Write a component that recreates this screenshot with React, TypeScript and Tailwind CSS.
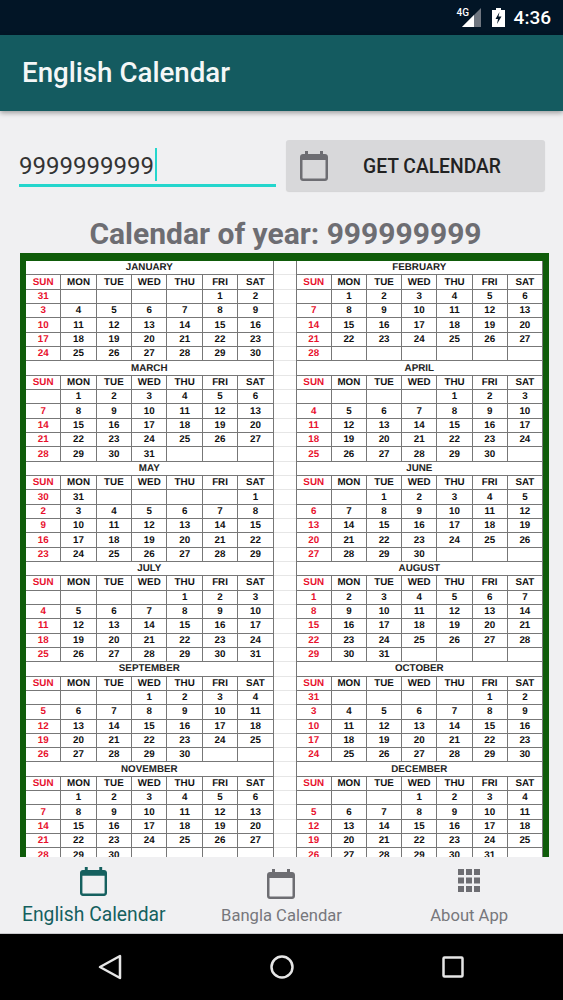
import React from "react";

const DAYS = ["SUN", "MON", "TUE", "WED", "THU", "FRI", "SAT"];

// first = weekday of the 1st, days that don't fit wrap into the first row
const MONTHS = [
  { name: "JANUARY", first: 5, len: 31 },
  { name: "FEBRUARY", first: 1, len: 28 },
  { name: "MARCH", first: 1, len: 31 },
  { name: "APRIL", first: 4, len: 30 },
  { name: "MAY", first: 6, len: 31 },
  { name: "JUNE", first: 2, len: 30 },
  { name: "JULY", first: 4, len: 31 },
  { name: "AUGUST", first: 0, len: 31 },
  { name: "SEPTEMBER", first: 3, len: 30 },
  { name: "OCTOBER", first: 5, len: 31 },
  { name: "NOVEMBER", first: 1, len: 30 },
  { name: "DECEMBER", first: 3, len: 31 },
];

function buildCells(first: number, len: number) {
  const cells: (number | null)[] = Array(35).fill(null);
  for (let d = 1; d <= len; d++) {
    cells[(first + d - 1) % 35] = d;
  }
  return cells;
}

function Cell({ col, children }: { col: number; children?: React.ReactNode }) {
  return (
    <div
      className={
        col === 0
          ? "h-[14.33px] pt-[1px] flex items-center justify-center border-b border-r border-[#777] text-[#e8112d]"
          : "h-[14.33px] pt-[1px] flex items-center justify-center border-b border-r border-[#777] text-[#111]"
      }
    >
      {children}
    </div>
  );
}

function Month({ name, first, len }: { name: string; first: number; len: number }) {
  return (
    <div>
      <div className="h-[14.33px] pt-[1px] flex items-center justify-center border-b border-r border-[#777] text-[#222]">
        {name}
      </div>
      <div className="grid grid-cols-7">
        {DAYS.map((d, i) => (
          <Cell key={d} col={i}>
            {d}
          </Cell>
        ))}
        {buildCells(first, len).map((d, i) => (
          <Cell key={i} col={i % 7}>
            {d}
          </Cell>
        ))}
      </div>
    </div>
  );
}

function CalendarIcon({ className }: { className: string }) {
  return (
    <svg viewBox="0 0 28 30" className={className} fill="currentColor">
      <path d="M5 0h3v3h12V0h3v3h2c1.7 0 3 1.3 3 3v21c0 1.7-1.300 3-3 3H3c-1.700 0-3-1.300-3-3V6c0-1.700 1.300-3 3-3h2V0zM2.500 9v18c0 .3.200.5.500.5h22c.3 0 .5-.2.500-.5V9h-23z" />
    </svg>
  );
}

function GridIcon() {
  return (
    <svg viewBox="0 0 22 23" className="w-[22px] h-[23px]" fill="#6d6d72">
      {[0, 8.500, 17].map((y) =>
        [0, 8, 16].map((x) => <rect key={`${x}-${y}`} x={x} y={y} width="6" height="6" />),
      )}
    </svg>
  );
}

function StatusBar() {
  return (
    <div className="h-[35px] bg-[#021526] flex items-center justify-end pr-3 text-white">
      <div className="relative w-[24px] h-[20px] mr-[11px]">
        <span className="absolute left-0 top-0 text-[10px] leading-[10px] font-medium">4G</span>
        <svg viewBox="0 0 19 19" className="absolute right-0 top-0 w-[19px] h-[19px]">
          <path d="M19 0v19H0z" fill="#6f7680" />
          <path d="M12 7v12H0z" fill="#ffffff" />
        </svg>
      </div>
      <svg viewBox="0 0 13 19" className="w-[13px] h-[19px] mr-[9px]">
        <path d="M4 0h5v2h4v17H0V2h4z" fill="#ffffff" />
        <path d="M7.500 4 3.500 11h2.500l-1 5 4.500-7.500H6.500z" fill="#021526" />
      </svg>
      <span className="text-[19px] leading-none font-medium">4:36</span>
    </div>
  );
}

function NavTab({
  label,
  active,
  icon,
}: {
  label: string;
  active?: boolean;
  icon: React.ReactNode;
}) {
  return (
    <div className="flex flex-col items-center">
      <div className={active ? "h-[37px] pt-[10px]" : "h-[39px] pt-[12px]"}>{icon}</div>
      <span
        className={
          active
            ? "text-[19.300px] leading-[28px] text-[#15605f] mt-[7px]"
            : "text-[16.600px] leading-[26px] text-[#77777c] mt-[7px]"
        }
      >
        {label}
      </span>
    </div>
  );
}

export default function App() {
  return (
    <div
      className="w-[563px] h-[1000px] flex flex-col overflow-hidden bg-[#f0f0f2]"
      style={{ fontFamily: "Roboto, sans-serif" }}
    >
      <StatusBar />

      <header className="h-[76px] shrink-0 bg-[#145b60] flex items-center pl-[22px] shadow-[0_2px_5px_rgba(0,0,0,0.35)] z-10">
        <h1 className="text-[27.700px] font-medium text-[#f4f7f7]">English Calendar</h1>
      </header>

      <main className="flex-1 overflow-hidden">
        <div className="flex pt-[29px] pl-[19px]">
          <div className="w-[257px] h-[47px] flex items-end border-b-[3px] border-[#24d6cd]">
            <span className="text-[24px] leading-[35px] text-[#333]">9999999999</span>
            <span className="w-[2px] h-[33px] ml-[1px] mb-[3px] bg-[#24d6cd]" />
          </div>
          <button
            type="button"
            className="w-[259px] h-[51px] ml-[10px] rounded-[3px] bg-[#d8d8da] shadow-[0_1px_1px_rgba(0,0,0,0.12)] flex items-center pl-[14px] text-[#6d6d72]"
          >
            <CalendarIcon className="w-[28px] h-[30px]" />
            <span className="ml-[35px] text-[19.300px] leading-[28px] pt-[2px] font-medium text-[#222]">
              GET CALENDAR
            </span>
          </button>
        </div>

        <h2 className="mt-[17px] h-[45px] pl-[8px] text-center text-[30px] leading-[51px] font-bold text-[#6d6d72]">
          Calendar of year: 999999999
        </h2>

        <div className="ml-[20px] w-[529px] border-x-[6px] border-t-[8px] border-[#0f5c0a] bg-white">
          <div
            className="grid grid-cols-[247.600px_22px_247.400px] font-bold text-[9.800px] leading-none [text-rendering:geometricPrecision]"
            style={{ fontFamily: '"Liberation Sans", Arial, sans-serif' }}
          >
            <div>
              {MONTHS.filter((_, i) => i % 2 === 0).map((m) => (
                <Month key={m.name} {...m} />
              ))}
            </div>
            <div>
              {Array.from({ length: 42 }).map((_, i) => (
                <div key={i} className="h-[14.33px] border-b border-[#e6e6e6]" />
              ))}
            </div>
            <div className="border-l border-[#777]">
              {MONTHS.filter((_, i) => i % 2 === 1).map((m) => (
                <Month key={m.name} {...m} />
              ))}
            </div>
          </div>
        </div>
      </main>

      <nav className="h-[77px] shrink-0 bg-[#f0f0f2] grid grid-cols-3 border-b border-[#c9c9cc]">
        <NavTab
          active
          label="English Calendar"
          icon={<CalendarIcon className="w-[27px] h-[29px] text-[#15605f]" />}
        />
        <NavTab
          label="Bangla Calendar"
          icon={<CalendarIcon className="w-[28px] h-[30px] text-[#6d6d72]" />}
        />
        <NavTab label="About App" icon={<GridIcon />} />
      </nav>

      <div className="h-[66px] shrink-0 bg-black flex items-center justify-between pl-[98px] pr-[99px] pb-[1px]">
        <svg viewBox="0 0 24 26" className="w-[24px] h-[26px]" fill="none" stroke="#e6e6e6" strokeWidth="2.500" strokeLinejoin="round">
          <path d="M22 2v22L2 13z" />
        </svg>
        <svg viewBox="0 0 24 24" className="w-[24px] h-[24px]" fill="none" stroke="#e6e6e6" strokeWidth="2.500">
          <circle cx="12" cy="12" r="10.500" />
        </svg>
        <svg viewBox="0 0 22 22" className="w-[22px] h-[22px]" fill="none" stroke="#e6e6e6" strokeWidth="2.500" strokeLinejoin="round">
          <rect x="1.500" y="1.500" width="19" height="19" rx="1" />
        </svg>
      </div>
    </div>
  );
}
